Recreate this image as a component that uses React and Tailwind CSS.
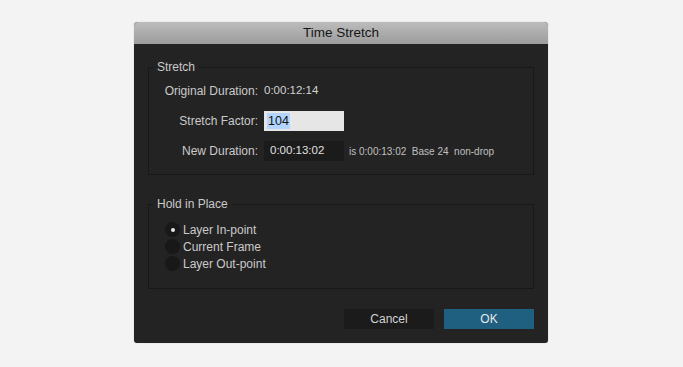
import { useState } from "react";

const font = { fontFamily: '"Liberation Sans", Arial, sans-serif' };

function Radio({ checked, label, onSelect }) {
  return (
    <div className="flex h-[17px] items-center cursor-default" onClick={onSelect}>
      <span className="flex h-[15px] w-[15px] items-center justify-center rounded-full bg-[#181818]">
        {checked && <span className="h-[4px] w-[4px] rounded-full bg-[#e8e8e8]" />}
      </span>
      <span className="ml-[3px] text-[12px] text-[#cacaca]">{label}</span>
    </div>
  );
}

export default function App() {
  const [hold, setHold] = useState("in");

  return (
    <div className="min-h-[367px] w-full bg-[#f3f3f3] pt-[22px]" style={font}>
      <div className="ml-[134px] w-[414px] overflow-hidden rounded-t-[4px] rounded-b-[3px] bg-[#232323] shadow-[0_0_1px_rgba(0,0,0,0.3)]">
        {/* Title bar */}
        <div className="flex h-[22px] items-center justify-center bg-gradient-to-b from-[#bcbcbc] to-[#9c9c9c] text-[13.5px] text-[#161616]">
          Time Stretch
        </div>

        <div className="px-[14px] pt-[16px] pb-[14px]">
          {/* Stretch */}
          <fieldset className="border border-[#181818] pt-[7px] pb-[13px]">
            <legend className="ml-[4px] px-[4px] text-[12px] leading-[14px] text-[#cacaca]">Stretch</legend>
            <div className="grid grid-cols-[109px_auto] gap-x-[6px] gap-y-[10px] text-[12px] text-[#cacaca]">
              <div className="flex h-[20px] items-center justify-end">Original Duration:</div>
              <div className="flex h-[20px] items-center text-[11.5px] text-[#d2d2d2]">0:00:12:14</div>

              <div className="flex h-[20px] items-center justify-end">Stretch Factor:</div>
              <div className="flex h-[20px] w-[80px] items-center bg-[#e6e6e6] pl-[3px]">
                <span className="bg-[#b3d5fd] px-[1px] text-[12.5px] leading-[16px] text-[#111]">104</span>
              </div>

              <div className="flex h-[20px] items-center justify-end">New Duration:</div>
              <div className="flex items-center">
                <div className="flex h-[20px] w-[80px] items-center bg-[#1b1b1b] pl-[6px] text-[11.5px] text-[#e0e0e0]">
                  0:00:13:02
                </div>
                <span className="ml-[5px] whitespace-pre text-[10px] text-[#c0c0c0]">is 0:00:13:02  Base 24  non-drop</span>
              </div>
            </div>
          </fieldset>

          {/* Hold in Place */}
          <fieldset className="mt-[22px] border border-[#181818] pt-[10px] pb-[16px] pl-[16px]">
            <legend className="-ml-[12px] px-[4px] text-[12px] leading-[14px] text-[#cacaca]">Hold in Place</legend>
            <Radio checked={hold === "in"} label="Layer In-point" onSelect={() => setHold("in")} />
            <Radio checked={hold === "frame"} label="Current Frame" onSelect={() => setHold("frame")} />
            <Radio checked={hold === "out"} label="Layer Out-point" onSelect={() => setHold("out")} />
          </fieldset>

          {/* Buttons */}
          <div className="mt-[20px] flex justify-end gap-[10px]">
            <button className="h-[20px] w-[90px] bg-[#1b1b1b] text-[12px] text-[#d2d2d2]">Cancel</button>
            <button className="h-[20px] w-[90px] bg-[#1f5f80] text-[12px] text-[#e8e8e8]">OK</button>
          </div>
        </div>
      </div>
    </div>
  );
}
